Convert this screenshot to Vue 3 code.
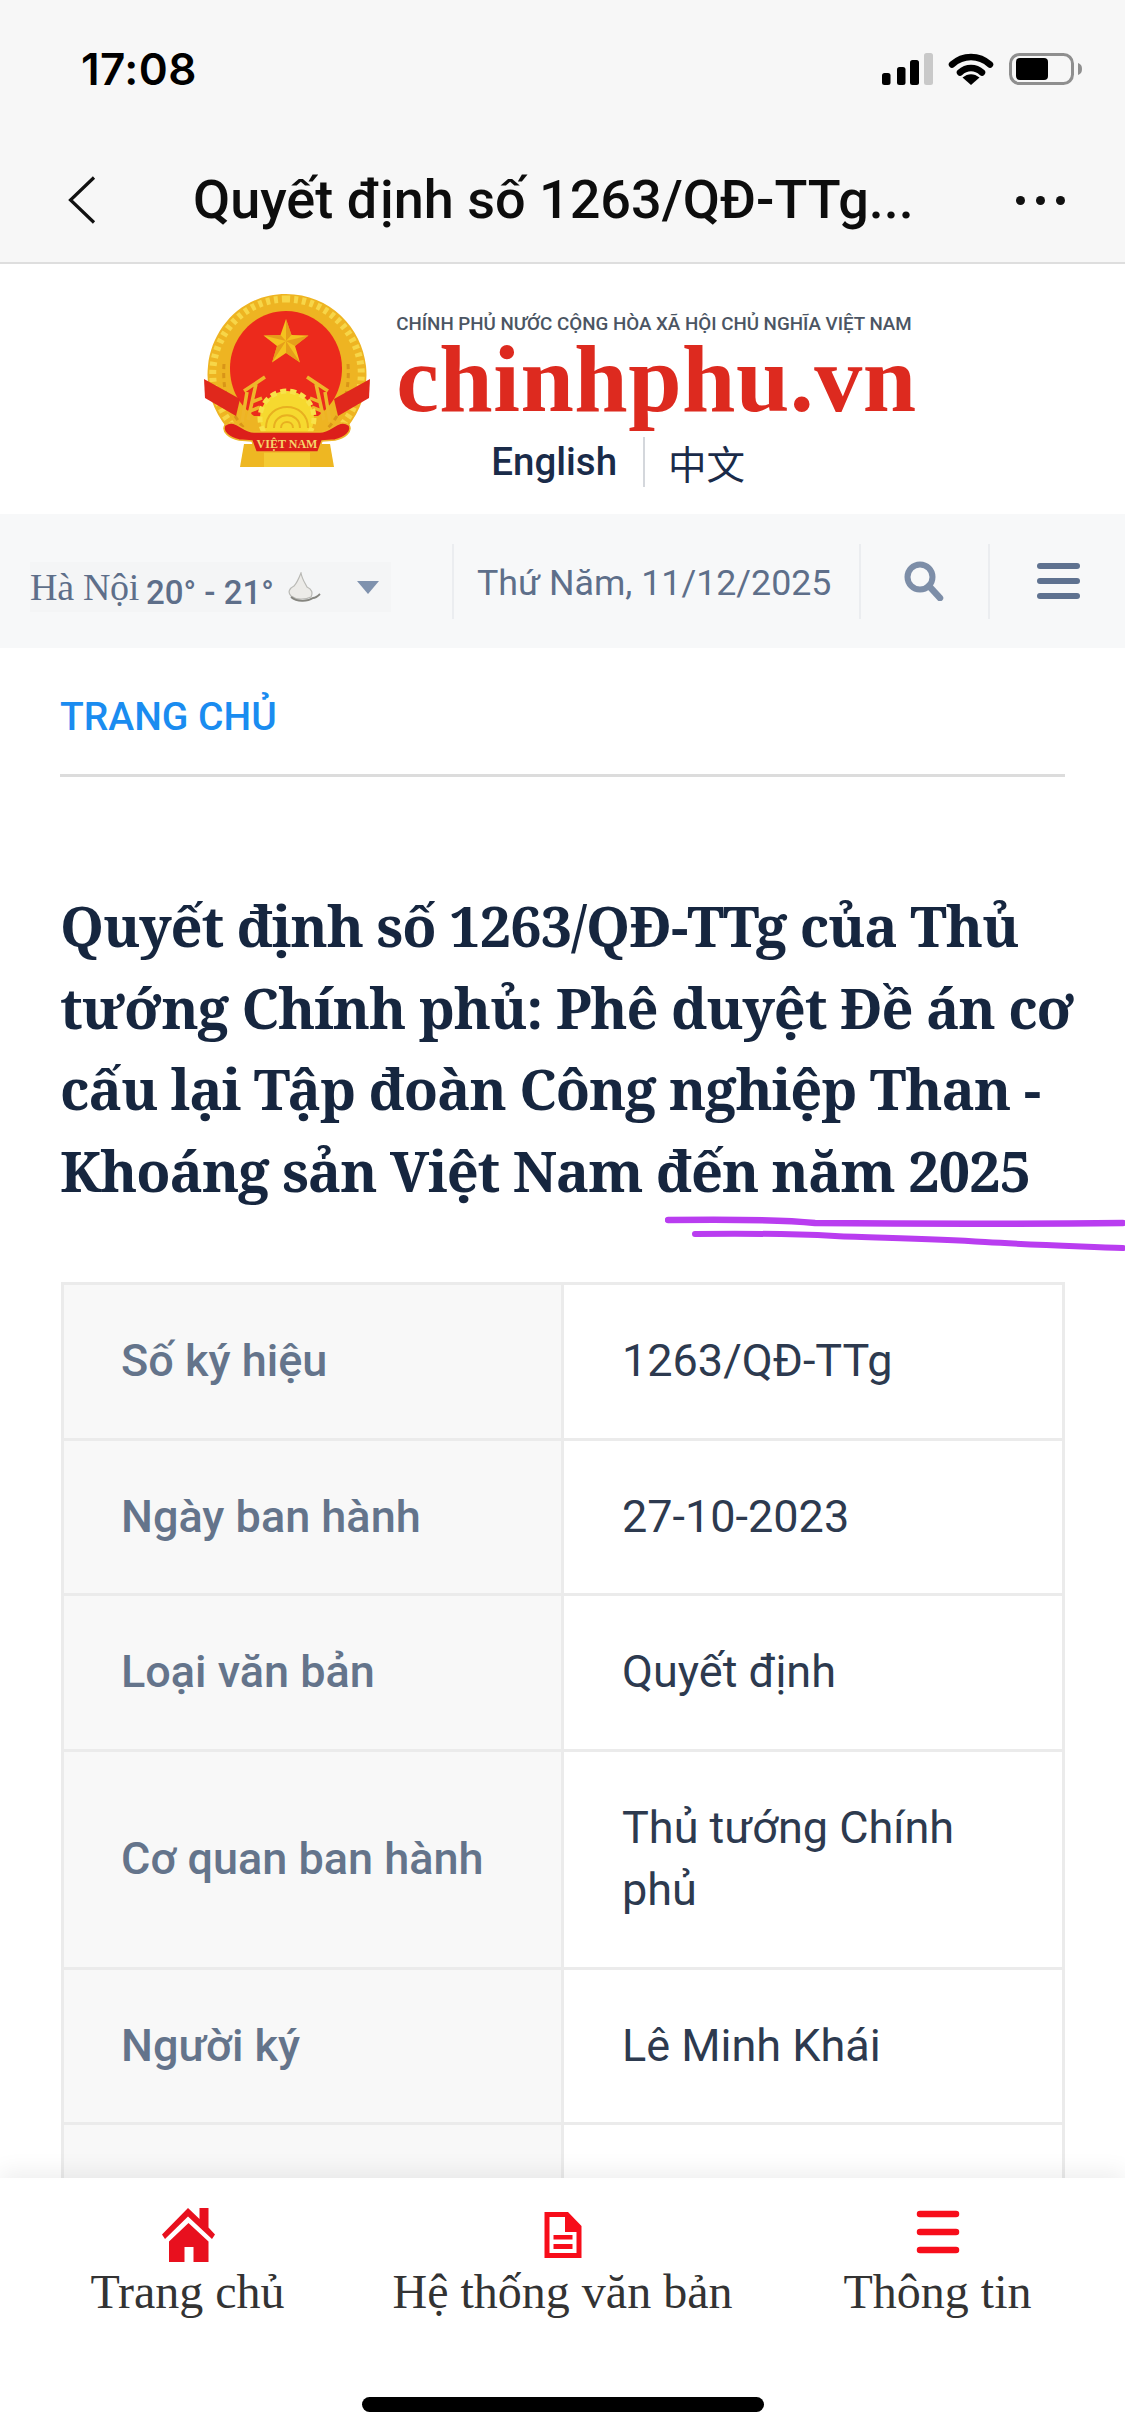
<template>
  <div class="page">
    <header class="app-head">
      <div class="status">
        <span class="time">17:08</span>
        <div class="status-icons">
          <svg width="51" height="32" viewBox="0 0 51 32">
            <rect x="0" y="20" width="8.500" height="12" rx="2.500" fill="#000" />
            <rect x="15" y="14" width="8.500" height="18" rx="2.500" fill="#000" />
            <rect x="28" y="7" width="9" height="25" rx="2.500" fill="#000" />
            <rect x="42" y="0" width="9" height="32" rx="2.500" fill="#c9c9c9" />
          </svg>
          <svg width="46" height="32" viewBox="0 0 46 32">
            <path d="M4 11.500C15 1.500 31 1.500 42 11.500" fill="none" stroke="#000" stroke-width="6.500" stroke-linecap="round" />
            <path d="M12 19.500C18.500 13.500 27.500 13.500 34 19.500" fill="none" stroke="#000" stroke-width="6.500" stroke-linecap="round" />
            <path d="M23 32L14.500 24.500C20 20 26 20 31.500 24.500Z" fill="#000" />
          </svg>
          <svg width="73" height="32" viewBox="0 0 73 32">
            <rect x="1.500" y="1.500" width="62" height="29" rx="9" fill="none" stroke="#8f8f8f" stroke-width="3" />
            <rect x="7" y="5" width="32" height="22" rx="4" fill="#000" />
            <path d="M69 10C72 11 73 13 73 16C73 19 72 21 69 22Z" fill="#8f8f8f" />
          </svg>
        </div>
      </div>
      <div class="nav">
        <svg class="back" width="28" height="48" viewBox="0 0 28 48">
          <path d="M26 1.500L2.500 24L26 46.500" fill="none" stroke="#111" stroke-width="3.200" />
        </svg>
        <span class="nav-title">Quyết định số 1263/QĐ-TTg...</span>
        <div class="more"><i></i><i></i><i></i></div>
      </div>
    </header>

    <section class="brand">
      <svg class="emblem" width="170" height="176" viewBox="0 0 170 176">
        <!-- wreath -->
        <path d="M84 0C40 0 10 34 6 72C3 100 14 122 30 140L140 140C156 122 167 100 164 72C160 34 128 0 84 0Z" fill="#eeb422" />
        <path d="M84 5C44 5 15 37 11 73C9 97 18 118 33 135" fill="none" stroke="#f7d648" stroke-width="7" stroke-dasharray="4 4" />
        <path d="M84 5C124 5 155 37 159 73C161 97 152 118 137 135" fill="none" stroke="#f7d648" stroke-width="7" stroke-dasharray="4 4" />
        <path d="M22 70C20 100 28 118 42 134M146 70C148 100 140 118 126 134" fill="none" stroke="#d99518" stroke-width="3" stroke-dasharray="5 4" />
        <!-- red field -->
        <path d="M84 17C52 17 28 44 28 74C28 96 38 112 52 122H116C130 112 140 96 140 74C140 44 116 17 84 17Z" fill="#ec2a1c" />
        <!-- star -->
        <path d="M84 25L89.500 41L106.500 41.500L93 52L98 68.500L84 59L70 68.500L75 52L61.500 41.500L78.500 41Z" fill="#f4c21f" />
        <path d="M84 25L89.500 41L84 47ZM106.500 41.500L93 52L84 47ZM98 68.500L84 59V47ZM70 68.500L75 52L84 47ZM61.500 41.500L78.500 41L84 47Z" fill="#e2921a" opacity="0.75" />
        <!-- side ribbons -->
        <path d="M2 85L38 105L34 122L3 104Z" fill="#e0281c" />
        <path d="M168 85L132 105L136 122L167 104Z" fill="#e0281c" />
        <!-- rice -->
        <path d="M63 83L42 97M54 90L46 126M45 98L40 128M50 108L60 104M46 118L58 113" fill="none" stroke="#eeb62a" stroke-width="3.500" />
        <path d="M105 83L126 97M114 90L122 126M123 98L128 128M118 108L108 104M122 118L110 113" fill="none" stroke="#eeb62a" stroke-width="3.500" />
        <!-- gear -->
        <circle cx="85" cy="124" r="27" fill="#f6d92f" stroke="#f8e24a" stroke-width="5" stroke-dasharray="6 4" />
        <path d="M64 134C64 106 106 106 106 134M72 134C72 117 98 117 98 134M79 134C79 126 91 126 91 134" fill="none" stroke="#e8b020" stroke-width="2" />
        <!-- base and banner -->
        <path d="M42 150H128L132 173H38Z" fill="#eeb722" />
        <path d="M62 158H108V173H62Z" fill="#f4cb34" />
        <path d="M23 131C34 124 40 138 52 138H118C130 138 136 124 147 131C151 138 142 144 133 146L120 147L116 158H54L50 147L37 146C28 144 19 138 23 131Z" fill="#dc1f1a" stroke="#eeb62a" stroke-width="1.500" />
        <text class="emblem-text" x="85" y="154" text-anchor="middle">VIỆT NAM</text>
      </svg>
      <div class="brand-text">
        <div class="gov">CHÍNH PHỦ NƯỚC CỘNG HÒA XÃ HỘI CHỦ NGHĨA VIỆT NAM</div>
        <div class="site">chinhphu.vn</div>
        <div class="langs">
          <span class="lang-en">English</span>
          <span class="lang-cn">中文</span>
        </div>
      </div>
    </section>

    <section class="toolbar">
      <div class="weather">
        <span class="city">Hà Nội</span>
        <span class="temp">20° - 21°</span>
        <svg class="cloud" width="36" height="30" viewBox="0 0 36 30">
          <path d="M16 1C17 7 20 11 22 15C27 17 28 21 26 25C20 28 11 28 6 24C2 20 5 16 9 14C12 11 14 6 16 1Z" fill="#ecebe8" stroke="#b9b9b5" stroke-width="1.200" />
          <path d="M6 25C12 30 22 30 28 26C31 26 33 24 35 22" fill="none" stroke="#85857f" stroke-width="1.800" />
        </svg>
        <span class="caret"></span>
      </div>
      <span class="sep"></span>
      <span class="date">Thứ Năm, 11/12/2025</span>
      <span class="sep"></span>
      <svg class="search" width="40" height="40" viewBox="0 0 40 40">
        <circle cx="16" cy="16" r="12.500" fill="none" stroke="#7d8ea8" stroke-width="6" />
        <path d="M25 25L36 37" stroke="#7d8ea8" stroke-width="6.500" stroke-linecap="round" />
      </svg>
      <span class="sep"></span>
      <div class="burger"><i></i><i></i><i></i></div>
    </section>

    <main class="content">
      <div class="crumb">TRANG CHỦ</div>
      <h1 class="title">Quyết định số 1263/QĐ-TTg của Thủ tướng Chính phủ: Phê duyệt Đề án cơ cấu lại Tập đoàn Công nghiệp Than - Khoáng sản Việt Nam đến năm 2025</h1>
      <div class="info">
        <div v-for="row in rows" :key="row.label" class="info-row" :class="{ tall: row.tall }">
          <div class="cell label">{{ row.label }}</div>
          <div class="cell value">{{ row.value }}</div>
        </div>
      </div>
    </main>

    <!-- pen strokes drawn on top of the screenshot -->
    <svg class="scribble" width="460" height="40" viewBox="0 0 460 40">
      <path d="M3 4C80 3 120 4 150 7C250 8 360 8 458 7" fill="none" stroke="#b93df0" stroke-width="6.500" stroke-linecap="round" />
      <path d="M30 18C100 17 130 18 170 20C210 22 260 22 320 26C370 29 410 30 458 32" fill="none" stroke="#b93df0" stroke-width="6" stroke-linecap="round" />
    </svg>

    <nav class="tabbar">
      <div class="tabs">
        <div class="tab">
          <svg width="56" height="54" viewBox="0 0 56 54">
            <path d="M28 0L39.500 11V0H48.500V19.500L55 26.500L52 31L28 8.500L5 31L2 26.500Z" fill="#e8101e" />
            <path d="M28.500 15L48.500 33.500V54H33.500V39H24.500V54H9V33.500Z" fill="#e8101e" />
          </svg>
          <span>Trang chủ</span>
        </div>
        <div class="tab">
          <svg width="56" height="54" viewBox="0 0 56 54">
            <path fill-rule="evenodd" d="M9.500 4H33L46.500 18V50H9.500ZM14.500 9V45H41.500V24H30V9Z" fill="#f70d1a" />
            <path d="M18.500 27H37.500V31.500H18.500ZM18.500 36H37.500V41H18.500Z" fill="#f70d1a" />
          </svg>
          <span>Hệ thống văn bản</span>
        </div>
        <div class="tab">
          <svg width="56" height="54" viewBox="0 0 56 54">
            <path d="M10 6H46M10 24H46M10 42H46" stroke="#f70d1a" stroke-width="6.500" stroke-linecap="round" />
          </svg>
          <span>Thông tin</span>
        </div>
      </div>
      <div class="home-bar"></div>
    </nav>
  </div>
</template>

<script setup>
const rows = [
  { label: "Số ký hiệu", value: "1263/QĐ-TTg" },
  { label: "Ngày ban hành", value: "27-10-2023" },
  { label: "Loại văn bản", value: "Quyết định" },
  { label: "Cơ quan ban hành", value: "Thủ tướng Chính phủ", tall: true },
  { label: "Người ký", value: "Lê Minh Khái" },
  { label: "Lĩnh vực", value: "Doanh nghiệp" },
];
</script>

<style>
html,
body {
  margin: 0;
  background: #fff;
}
</style>

<style scoped>
.page {
  position: relative;
  width: 1125px;
  height: 2436px;
  overflow: hidden;
  background: #fff;
  font-family: Roboto, "Liberation Sans", sans-serif;
}
.app-head {
  height: 262px;
  background: #f7f7f7;
  border-bottom: 2px solid #dedede;
}
.status {
  display: flex;
  justify-content: space-between;
  align-items: flex-start;
  padding: 44px 43px 0 81px;
  height: 147px;
  box-sizing: border-box;
}
.time {
  font: 600 44px/50px Inter, sans-serif;
  letter-spacing: 0.400px;
  color: #000;
}
.status-icons {
  display: flex;
  align-items: center;
  gap: 15px;
  margin-top: 9px;
}
.nav {
  display: flex;
  align-items: center;
  height: 106px;
  padding: 0 60px 0 68px;
}
.nav-title {
  flex: 1;
  margin-left: 97px;
  font: 500 54px/64px Roboto, sans-serif;
  color: #0d0d0d;
  white-space: nowrap;
}
.more {
  display: flex;
  gap: 11px;
}
.more i {
  width: 9px;
  height: 9px;
  border-radius: 50%;
  background: #111;
}
.brand {
  display: flex;
  justify-content: center;
  align-items: flex-start;
  gap: 24px;
  height: 250px;
  box-sizing: border-box;
  padding: 30px 6px 0 0;
}
.emblem-text {
  font: 700 12px "Liberation Serif", serif;
  fill: #f5d66a;
}
.gov {
  font: 500 18.750px/22px Roboto, sans-serif;
  color: #4b5563;
  margin-top: 19px;
  white-space: nowrap;
}
.site {
  font: 700 96px/88px "Liberation Serif", serif;
  letter-spacing: 0.500px;
  color: #dd2a1f;
}
.langs {
  display: flex;
  margin: 14px 0 0 95px;
  font-size: 38.500px;
  line-height: 50px;
  color: #1a2b49;
}
.lang-en {
  font-weight: 500;
  padding-right: 26px;
  border-right: 2px solid #d4d7dc;
}
.lang-cn {
  font-family: "Noto Sans CJK SC", sans-serif;
  padding-left: 23px;
}
.toolbar {
  display: flex;
  align-items: center;
  height: 134px;
  background: #f7f8f9;
  box-sizing: border-box;
  padding: 0 45px 0 30px;
  color: #5e6f8a;
}
.weather {
  display: flex;
  align-items: center;
  width: 361px;
  height: 50px;
  flex: none;
  background: #f4f5f6;
  margin-top: 12px;
}
.city {
  font: 400 38px/50px "Liberation Serif", serif;
  letter-spacing: -0.300px;
}
.temp {
  font-size: 33px;
  font-weight: 500;
  margin: 10px 0 0 7px;
}
.cloud {
  margin-left: 11px;
}
.caret {
  width: 0;
  height: 0;
  margin-left: 36px;
  border-left: 11px solid transparent;
  border-right: 11px solid transparent;
  border-top: 13px solid #7f92ae;
}
.sep {
  flex: none;
  width: 2px;
  height: 75px;
  background: #ebedf0;
}
.weather + .sep {
  margin-left: 61px;
}
.date {
  margin: 3px 26px 0 23px;
  width: 356px;
  font-size: 35.750px;
  white-space: nowrap;
}
.search {
  margin: 0 44px 0 43px;
  flex: none;
}
.burger {
  display: flex;
  flex-direction: column;
  gap: 9px;
  margin-left: 47px;
}
.burger i {
  width: 43px;
  height: 6px;
  border-radius: 3px;
  background: #5f7290;
}
.content {
  padding: 0 60px;
}
.crumb {
  font-size: 39px;
  font-weight: 500;
  line-height: 50px;
  color: #1a8cf0;
  padding: 44px 0 32px;
  border-bottom: 3px solid #dcdcdc;
}
.title {
  margin: 108px -30px 0 0;
  font: 700 56px/81.500px "Noto Serif", "DejaVu Serif Condensed", "Liberation Serif", serif;
  letter-spacing: -1.100px;
  color: #16263f;
}
.info {
  margin: 71px 0 0 1px;
  border-top: 3px solid #ebebeb;
  border-left: 3px solid #ebebeb;
}
.info-row {
  display: flex;
  height: 155.500px;
  box-sizing: border-box;
  border-bottom: 3px solid #ebebeb;
}
.info-row.tall {
  height: 218px;
}
.cell {
  display: flex;
  align-items: center;
  box-sizing: border-box;
  font-size: 45px;
  line-height: 62px;
  border-right: 3px solid #ebebeb;
}
.label {
  width: 500px;
  padding-left: 57px;
  background: #f8f8f8;
  color: #64748b;
  font-weight: 500;
}
.value {
  width: 501px;
  padding: 0 60px 0 58px;
  color: #2d3a4f;
}
.scribble {
  position: absolute;
  left: 665px;
  top: 1216px;
}
.tabbar {
  position: absolute;
  left: 0;
  right: 0;
  bottom: 0;
  height: 258px;
  background: #fff;
  box-shadow: 0 -6px 22px rgba(0, 0, 0, 0.07);
}
.tabs {
  display: flex;
  justify-content: space-between;
  padding: 30px 0 0;
}
.tab {
  display: flex;
  flex-direction: column;
  align-items: center;
  width: 375px;
  font: 400 48px/60px "Liberation Serif", serif;
  color: #333;
}
.home-bar {
  position: absolute;
  left: 362px;
  bottom: 24px;
  width: 402px;
  height: 15px;
  border-radius: 8px;
  background: #000;
}
</style>
